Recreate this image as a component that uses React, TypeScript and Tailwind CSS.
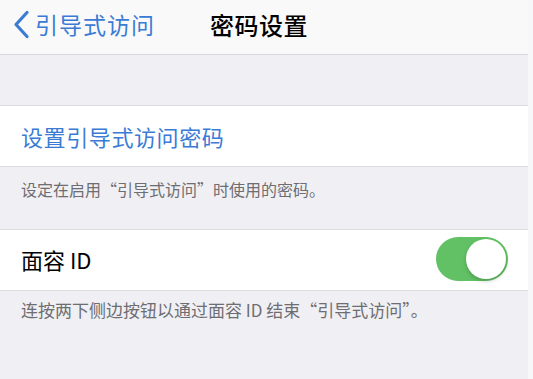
import React from "react";

const font = { fontFamily: '"Noto Sans CJK SC", "Noto Sans", sans-serif' };

export default function App() {
  return (
    <div className="flex w-[533px] h-[379px] overflow-hidden bg-[#f0f0f4]" style={font}>
      <div className="flex flex-col w-[528px] h-full">
        <div className="flex items-center h-[55px] pb-[5px] bg-[#f9f9f9] border-b border-[#d8d8dc] shrink-0">
          <div className="flex items-center pl-[12px] text-[#3a7bd5]">
            <svg width="18" height="30" viewBox="0 0 18 30" fill="none">
              <path d="M15 2.5 L4 14.5 L15 26.5" stroke="#3a7bd5" strokeWidth="3.2" strokeLinecap="round" strokeLinejoin="round" />
            </svg>
            <span className="ml-[5px] text-[23px] leading-none tracking-[1px]">引导式访问</span>
          </div>
          <span className="ml-[55px] text-[24px] leading-none font-medium text-black tracking-[0.5px]">密码设置</span>
        </div>
        <div className="h-[50px] shrink-0" />
        <div className="flex items-center h-[62px] bg-white border-y border-[#dcdce0] pl-[21px] shrink-0">
          <span className="text-[22px] leading-none text-[#3a7bd5] tracking-[0.6px]">设置引导式访问密码</span>
        </div>
        <div className="pl-[21px] pt-[10px] h-[62px] shrink-0">
          <span className="text-[16px] leading-[22px] text-[#6d6d72]">设定在启用“引导式访问”时使用的密码。</span>
        </div>
        <div className="flex items-center justify-between h-[62px] pb-[2px] bg-white border-y border-[#dcdce0] pl-[21px] pr-[20px] shrink-0">
          <span className="text-[22px] leading-none text-black">面容 ID</span>
          <div className="flex items-center justify-end w-[72px] h-[44px] rounded-full bg-[#62c164] p-[2px]">
            <div className="w-[40px] h-[40px] rounded-full bg-white shadow-[0_2px_4px_rgba(0,0,0,0.2)]" />
          </div>
        </div>
        <div className="pl-[21px] pt-[7px]">
          <span className="text-[17px] leading-[24px] text-[#6d6d72]">连按两下侧边按钮以通过面容 ID 结束“引导式访问”。</span>
        </div>
      </div>
      <div className="w-[5px] h-full bg-[#f7f7f9]" />
    </div>
  );
}
